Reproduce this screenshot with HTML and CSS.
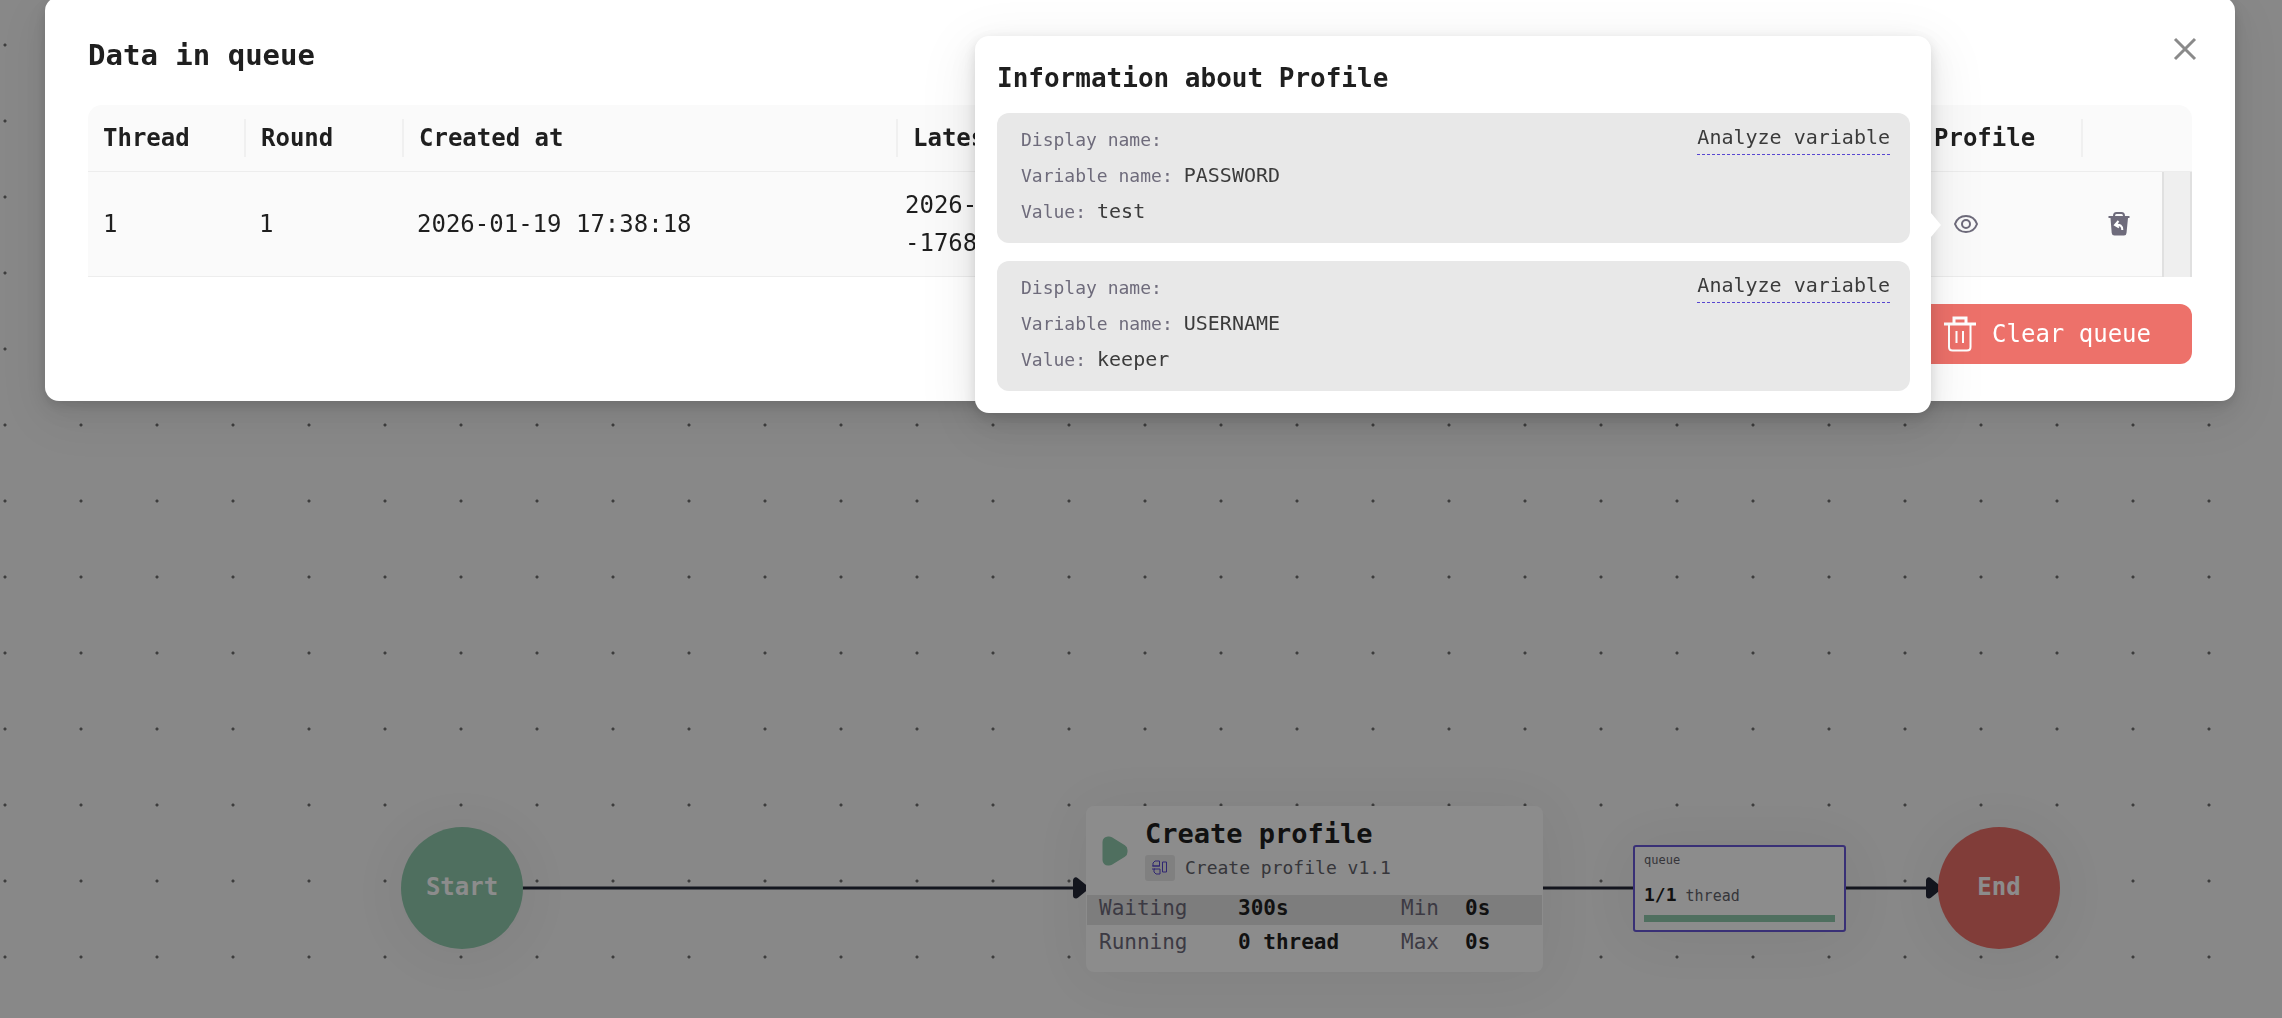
FILE: index.html
```
<!DOCTYPE html>
<html lang="en">
<head>
    <meta charset="UTF-8">
    <meta name="viewport" content="width=device-width, initial-scale=1.0">
    <title>Data in queue</title>
    <link rel="stylesheet" href="styles.css">
</head>
<body>

    <!-- Flow canvas -->
    <main class="canvas">
        <svg class="edges" aria-hidden="true">
            <defs>
                <marker id="arrow" markerUnits="userSpaceOnUse" markerWidth="16" markerHeight="24" refX="14" refY="12" orient="auto">
                    <path d="M4 4.500 V19.500 L12 13 V11 Z" fill="#242838" stroke="#242838" stroke-width="6" stroke-linejoin="round"/>
                </marker>
            </defs>
            <path class="edge" d="M522 888 H1086" marker-end="url(#arrow)"/>
            <path class="edge" d="M1542 888 H1634"/>
            <path class="edge" d="M1846 888 H1939" marker-end="url(#arrow)"/>
        </svg>

        <div class="node circle start">Start</div>

        <div class="node step">
            <div class="step-head">
                <svg class="play" viewBox="0 0 26 30" aria-hidden="true">
                    <path d="M6 6 V24 L7 24 L20 16 V14 L7 6 Z" fill="#90caad" stroke="#90caad" stroke-width="11" stroke-linejoin="round"/>
                </svg>
                <div>
                    <h2>Create profile</h2>
                    <div class="version">
                        <span class="version-icon">
                            <svg viewBox="0 0 16 16" aria-hidden="true">
                                <path d="M3 1H7.500V6H1V3ZM0 6H8M2 9H8V14H4L2 12ZM0 9H3M10.500 2H14.500V12H10.500Z"/>
                            </svg>
                        </span>
                        Create profile v1.1
                    </div>
                </div>
            </div>
            <div class="step-row striped">
                <span>Waiting</span><b>300s</b><span>Min</span><b>0s</b>
            </div>
            <div class="step-row">
                <span>Running</span><b>0 thread</b><span>Max</span><b>0s</b>
            </div>
        </div>

        <div class="node queue">
            <div class="queue-name">queue</div>
            <div class="queue-count"><b>1/1</b> thread</div>
            <div class="queue-bar"></div>
        </div>

        <div class="node circle end">End</div>
    </main>

    <!-- Modal -->
    <div class="mask">
        <section class="modal" role="dialog" aria-labelledby="modalTitle">
            <button class="close" aria-label="Close">
                <svg viewBox="0 0 24 24" aria-hidden="true"><path d="M2 2L22 22M22 2L2 22"/></svg>
            </button>
            <h1 id="modalTitle">Data in queue</h1>

            <table class="queue-table">
                <colgroup>
                    <col class="col-thread">
                    <col class="col-round">
                    <col class="col-created">
                    <col>
                    <col class="col-profile">
                    <col class="col-action">
                    <col class="col-gutter">
                </colgroup>
                <thead>
                    <tr>
                        <th>Thread</th>
                        <th>Round</th>
                        <th>Created at</th>
                        <th>Latest</th>
                        <th>Profile</th>
                        <th colspan="2"></th>
                    </tr>
                </thead>
                <tbody>
                    <tr>
                        <td>1</td>
                        <td class="cell-round">1</td>
                        <td class="cell-created">2026-01-19 17:38:18</td>
                        <td class="cell-latest">2026-<br>-1768</td>
                        <td class="cell-profile">
                            <button class="icon-button" aria-label="Show profile">
                                <svg viewBox="0 0 24 24" aria-hidden="true">
                                    <path d="M1 12C3 6.500 7 4 12 4S21 6.500 23 12C21 17.500 17 20 12 20S3 17.500 1 12Z"/>
                                    <circle cx="12" cy="12" r="4"/>
                                </svg>
                            </button>
                        </td>
                        <td class="cell-action">
                            <button class="icon-button" aria-label="Remove from queue">
                                <svg viewBox="0 0 24 24" aria-hidden="true">
                                    <path class="solid" d="M1.500 4H22.500V6H21L19.500 21Q19.300 23.500 17 23.500H7.500Q5 23.500 4.700 21L3.500 6H1.500Z"/>
                                    <path d="M7 4Q7 1 9.500 1H14.500Q17 1 17 4"/>
                                    <path class="cut" d="M11.500 9L8 13L12 15.500M8.500 13C13 12 15.500 14 15.300 18"/>
                                </svg>
                            </button>
                        </td>
                        <td class="cell-gutter"></td>
                    </tr>
                </tbody>
            </table>

            <div class="modal-footer">
                <button class="clear">
                    <svg viewBox="0 0 34 36" aria-hidden="true">
                        <path class="thick" d="M1 8H33M11 7V2H23V7"/>
                        <path d="M6 9V31Q6 34.500 9.500 34.500H24Q27.500 34.500 27.500 31V9M13.500 15V27M20 15V27"/>
                    </svg>
                    Clear queue
                </button>
            </div>

            <!-- Profile popover -->
            <div class="popover">
                <h3>Information about Profile</h3>
                <div class="variable">
                    <dl>
                        <div><dt>Display name:</dt><dd></dd></div>
                        <div><dt>Variable name:</dt><dd>PASSWORD</dd></div>
                        <div><dt>Value:</dt><dd>test</dd></div>
                    </dl>
                    <a href="#">Analyze variable</a>
                </div>
                <div class="variable">
                    <dl>
                        <div><dt>Display name:</dt><dd></dd></div>
                        <div><dt>Variable name:</dt><dd>USERNAME</dd></div>
                        <div><dt>Value:</dt><dd>keeper</dd></div>
                    </dl>
                    <a href="#">Analyze variable</a>
                </div>
            </div>
        </section>
    </div>

</body>
</html>
```
FILE: styles.css
```
/* General Styles */
* {
    box-sizing: border-box;
}

body {
    font-family: "DejaVu Sans Mono", monospace;
    font-size: 24px;
    color: #1f1f1f;
    margin: 0;
    min-height: 100vh;
    overflow: hidden;
}

h1, h2, h3, dl, dd {
    margin: 0;
}

button {
    font-family: inherit;
    font-size: 24px;
    border: none;
    cursor: pointer;
}

svg {
    display: block;
    fill: none;
}

/* Flow canvas */
.canvas {
    position: relative;
    height: 100vh;
    overflow: hidden;
    background-color: #f7f7f7;
    background-image: radial-gradient(circle, #707070 1px, transparent 2px);
    background-size: 76px 76px;
    background-position: -33px 7px;
}

.edges {
    position: absolute;
    width: 100%;
    height: 100%;
}

.edge {
    stroke: #242838;
    stroke-width: 3;
}

.node {
    position: absolute;
    box-shadow: 0 4px 60px rgba(0, 0, 0, 0.06);
}

.circle {
    top: 827px;
    width: 122px;
    height: 122px;
    border-radius: 50%;
    color: #ffffff;
    font-weight: bold;
    line-height: 120px;
    text-align: center;
}

.start {
    left: 401px;
    background-color: #90caad;
}

.end {
    left: 1938px;
    background-color: #ec6f69;
}

.step {
    left: 1086px;
    top: 806px;
    width: 457px;
    height: 166px;
    padding: 0 1px;
    background-color: #ffffff;
    border-radius: 8px;
    font-size: 21px;
}

.step-head {
    display: flex;
    align-items: center;
    gap: 17px;
    height: 89px;
    padding: 0 0 4px 15px;
}

.play {
    width: 26px;
    height: 30px;
    margin-top: 4px;
}

.step h2 {
    font-size: 27px;
    line-height: 38px;
}

.version {
    display: flex;
    align-items: center;
    gap: 10px;
    height: 30px;
    font-size: 18px;
    color: #63636b;
}

.version-icon {
    display: grid;
    place-items: center;
    width: 30px;
    height: 26px;
    border-radius: 3px;
    background-color: #eaeaea;
}

.version-icon svg {
    width: 16px;
    height: 16px;
    stroke: #5847d0;
}

.step-row {
    display: grid;
    grid-template-columns: 139px 163px 64px 1fr;
    height: 30px;
    line-height: 27px;
    margin-bottom: 4px;
    padding-left: 12px;
}

.step-row span {
    color: #6e6b7b;
}

.striped {
    background-color: #e4e4e4;
}

.queue {
    left: 1633px;
    top: 845px;
    width: 213px;
    height: 87px;
    padding: 6px 9px;
    border: 2px solid #6858d8;
    border-radius: 3px;
    background-color: #ffffff;
}

.queue-name {
    font-size: 12px;
    line-height: 14px;
    color: #63636b;
}

.queue-count {
    font-size: 15px;
    line-height: 22px;
    margin: 17px 0 8px;
    color: #63636b;
}

.queue-count b {
    font-size: 18px;
    color: #1f1f1f;
}

.queue-bar {
    height: 7px;
    background-color: #90caad;
}

/* Modal */
.mask {
    position: fixed;
    inset: 0;
    padding: 0 47px 0 45px;
    background-color: rgba(0, 0, 0, 0.45);
}

.modal {
    position: relative;
    margin-top: -3px;
    padding: 36px 43px 37px;
    background-color: #ffffff;
    border-radius: 14px;
    box-shadow: 0 10px 28px rgba(0, 0, 0, 0.08), 0 4px 12px rgba(0, 0, 0, 0.1), 0 16px 52px 14px rgba(0, 0, 0, 0.05);
}

.modal h1 {
    font-size: 29px;
    line-height: 44px;
    margin-bottom: 28px;
}

.close {
    position: absolute;
    top: 40px;
    right: 38px;
    padding: 0;
    background: none;
}

.close svg {
    width: 24px;
    height: 24px;
    stroke: #8a8a8a;
    stroke-width: 3;
}

/* Queue table */
.queue-table {
    width: 100%;
    table-layout: fixed;
    border-collapse: separate;
    border-spacing: 0;
    line-height: 38px;
}

.col-thread { width: 158px; }
.col-round { width: 158px; }
.col-created { width: 494px; }
.col-profile { width: 164px; }
.col-action { width: 79px; }
.col-gutter { width: 30px; }

.queue-table th,
.queue-table td {
    padding: 14px 15px;
    background-color: #fafafa;
    border-bottom: 1px solid #ededed;
    text-align: left;
}

.queue-table th {
    background-image: linear-gradient(#f0f0f0, #f0f0f0);
    background-repeat: no-repeat;
    background-position: right center;
    background-size: 2px 38px;
}

.queue-table th:first-child {
    border-top-left-radius: 14px;
}

.queue-table th:last-child {
    border-top-right-radius: 14px;
    background-image: none;
}

.queue-table .cell-round,
.queue-table .cell-created {
    padding-left: 13px;
}

.queue-table .cell-latest {
    padding-left: 7px;
}

.queue-table .cell-profile {
    padding-left: 35px;
}

.queue-table .cell-action {
    padding-left: 24px;
}

.queue-table .cell-gutter {
    background-color: #efefef;
    border: solid #e0e0e0;
    border-width: 0 2px;
}

.icon-button {
    display: block;
    padding: 0;
    background: none;
}

.icon-button svg {
    width: 24px;
    height: 24px;
    stroke: #6e6b7b;
    stroke-width: 2;
}

.icon-button .solid {
    fill: #6e6b7b;
    stroke: none;
}

.icon-button .cut {
    stroke: #ffffff;
}

.modal-footer {
    display: flex;
    justify-content: flex-end;
    margin-top: 27px;
}

.clear {
    display: flex;
    align-items: center;
    gap: 15px;
    height: 60px;
    padding: 0 41px;
    border-radius: 12px;
    background-color: #ed716a;
    color: #ffffff;
}

.clear svg {
    width: 34px;
    height: 36px;
    stroke: #ffffff;
    stroke-width: 2;
}

.clear .thick {
    stroke-width: 3;
}

/* Profile popover */
.popover {
    position: absolute;
    top: 39px;
    right: 304px;
    width: 956px;
    padding: 22px 21px 22px 22px;
    background-color: #ffffff;
    border-radius: 14px;
    box-shadow: 0 10px 28px rgba(0, 0, 0, 0.08), 0 4px 12px rgba(0, 0, 0, 0.1), 0 16px 52px 14px rgba(0, 0, 0, 0.05);
}

.popover::after {
    content: "";
    position: absolute;
    top: 50%;
    left: 100%;
    margin-top: -12px;
    border: 12px solid transparent;
    border-left: 10px solid #ffffff;
    border-right: none;
}

.popover h3 {
    font-size: 26px;
    line-height: 41px;
    margin-bottom: 14px;
}

.variable {
    display: flex;
    justify-content: space-between;
    align-items: flex-start;
    height: 130px;
    padding: 8px 20px 8px 24px;
    border-radius: 12px;
    background-color: #e8e8e8;
    font-size: 20px;
    color: #3b3b3b;
}

.variable + .variable {
    margin-top: 18px;
}

.variable dl div {
    display: flex;
    align-items: center;
    gap: 11px;
    height: 36px;
}

.variable dt {
    font-size: 18px;
    color: #6e6b7b;
}

.variable a {
    line-height: 33px;
    color: inherit;
    text-decoration: none;
    border-bottom: 1px dashed #5847d0;
}
```
